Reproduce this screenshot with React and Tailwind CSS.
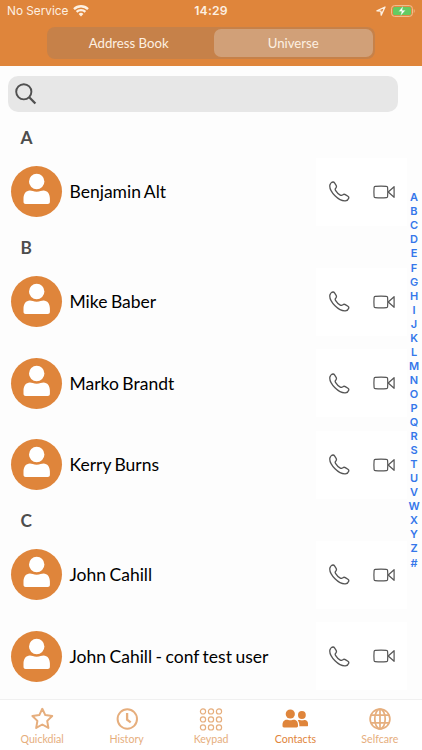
const sections = [
  { letter: 'A', contacts: ['Benjamin Alt'] },
  { letter: 'B', contacts: ['Mike Baber', 'Marko Brandt', 'Kerry Burns'] },
  { letter: 'C', contacts: ['John Cahill', 'John Cahill - conf test user'] },
]

const index = 'ABCDEFGHIJKLMNOPQRSTUVWXYZ#'.split('')

function StatusBar() {
  return (
    <div className="flex h-[22px] items-center px-[7px] font-['Inter',sans-serif] text-[11.8px] text-[#fdf0e2]">
      <div className="flex flex-1 items-center gap-[5px]">
        <span className="pt-px">No Service</span>
        <svg width="16" height="12" viewBox="0 0 16 12" fill="none" stroke="currentColor" strokeWidth="2.3">
          <path d="M1 4.1a10 10 0 0 1 14 0" />
          <path d="M3.6 6.9a6.3 6.3 0 0 1 8.8 0" />
          <path d="M8 11.4 5.6 9a3.4 3.4 0 0 1 4.8 0Z" fill="currentColor" stroke="none" />
        </svg>
      </div>
      <span className="pt-px text-[12.2px] font-semibold tracking-[0.2px]">14:29</span>
      <div className="flex flex-1 items-center justify-end gap-[5px]">
        <svg width="10" height="10" viewBox="0 0 10 10" fill="none" stroke="currentColor" strokeWidth="1.3" strokeLinejoin="round">
          <path d="M.9 4.9 9 1 5.2 9.1 4.9 5.1Z" />
        </svg>
        <svg width="24" height="12" viewBox="0 0 24 12">
          <rect x=".6" y=".6" width="20.8" height="10.8" rx="3" fill="none" stroke="#f3c497" />
          <rect x="2" y="2" width="18" height="8" rx="1.6" fill="#64cb62" />
          <path d="M22.8 4v4c1.1-.5 1.1-3.5 0-4Z" fill="#f3c497" />
          <path d="M12.1 1 7.5 6.6h3L9.5 11l5-5.8h-3.1Z" fill="#fff" stroke="#64cb62" strokeWidth=".4" />
        </svg>
      </div>
    </div>
  )
}

function PhoneIcon() {
  return (
    <svg width="21" height="21" viewBox="0 0 21 21" fill="none" stroke="#555" strokeWidth="1.3" strokeLinejoin="round">
      <path d="M.9 4C1.2 2.500 2.800 1 4.100 1c.8 0 1.200.5 1.600 1.100l1.400 2.200c.6 1 .5 1.700-.1 2.500l-.6.8c-.4.6-.3 1.100.1 1.700 1.200 2 2.800 3.600 4.800 4.800.6.4 1.100.4 1.700.1l.8-.5c.9-.6 1.600-.7 2.500-.1l2.600 1.700c.8.5 1.100 1.100.8 1.900-.5 1.500-1.900 2.600-3.400 2.700-3.100.2-6.900-1.700-10.300-5.100C2.700 11.400.3 7 .9 4Z" />
    </svg>
  )
}

function VideoIcon() {
  return (
    <svg width="22" height="14" viewBox="0 0 22 14" fill="none" stroke="#555" strokeWidth="1.2" strokeLinejoin="round">
      <path d="M2.2 1.4q6-.7 11.3 0 1 .1 1.100 1.100.4 4.500 0 9-.1 1-1.100 1.100-5.300.7-11.300 0-1-.1-1.100-1.100-.4-4.500 0-9Q1.200 1.500 2.200 1.400Z" />
      <path d="M15.200 7 21.100 1.700v10.600Z" />
    </svg>
  )
}

function ContactRow({ name }) {
  return (
    <div className="flex h-[81.5px] items-center pl-[10.5px]">
      <div className="flex h-[51px] w-[51px] shrink-0 justify-center rounded-full bg-[#df853b]">
        <svg width="51" height="51" viewBox="0 0 51 51" fill="#fff">
          <circle cx="25.700" cy="15.500" r="7.700" />
          <path d="M18.900 24.500c2 0 3.500 1.200 6.800 1.200s4.800-1.200 6.800-1.200c4 0 6.400 3.600 6.400 8v3.300c0 1.500-.9 2.200-2.200 2.200h-22c-1.300 0-2.200-.7-2.200-2.200v-3.300c0-4.400 2.400-8 6.400-8Z" />
        </svg>
      </div>
      <span className="flex-1 pt-0.5 pl-2 text-[17.5px] whitespace-nowrap text-black [word-spacing:-1px]">{name}</span>
      <div className="mr-[15px] flex h-[68px] w-[91px] items-center gap-[23.5px] bg-white pl-[12.5px]">
        <PhoneIcon />
        <VideoIcon />
      </div>
    </div>
  )
}

function StarIcon() {
  return (
    <svg width="24" height="24" viewBox="0 0 24 24" fill="none" stroke="currentColor" strokeWidth="2" strokeLinejoin="round">
      <path d="m12.3 1.800 3 6.300 6.900.9-5 4.900 1.200 7-6.100-3.400-6.100 3.400 1.200-7-5-4.900 6.900-.9Z" />
    </svg>
  )
}

function ClockIcon() {
  return (
    <svg width="24" height="24" viewBox="0 0 24 24" fill="none" stroke="currentColor" strokeWidth="2">
      <circle cx="12.300" cy="12" r="9.700" />
      <path d="M12.100 6v6.600l3.600 2.700" strokeWidth="2.300" />
    </svg>
  )
}

function KeypadIcon() {
  return (
    <svg width="24" height="24" viewBox="0 0 24 24" fill="none" stroke="currentColor" strokeWidth="1.200">
      {[4, 12, 20].map((y) => [4, 12, 20].map((x) => <circle key={`${x}-${y}`} cx={x} cy={y + 0.4} r="2.600" />))}
    </svg>
  )
}

function PeopleIcon() {
  return (
    <svg width="26" height="24" viewBox="0 0 26 24" fill="currentColor">
      <circle cx="8.300" cy="7" r="4.600" />
      <path d="M4.600 12.700c1.500 0 2 .6 3.700.6s2.200-.6 3.700-.6c2.700 0 4 2.500 4 5v1.400c0 .9-.6 1.400-1.400 1.400H1.900c-.8 0-1.400-.5-1.400-1.400v-1.400c0-2.500 1.400-5 4.100-5Z" />
      <circle cx="19.900" cy="8" r="3.900" />
      <path d="M15.700 13.500c.4-.3.900-.4 1.500-.4 1.200 0 1.500.4 2.800.4s1.600-.4 2.800-.4c2.200 0 3.300 2.100 3.300 4v1c0 .8-.4 1.200-1.100 1.200h-7.700c.2-2.300-.2-4.300-1.600-5.800Z" />
    </svg>
  )
}

function GlobeIcon() {
  return (
    <svg width="24" height="24" viewBox="0 0 24 24" fill="none" stroke="currentColor" strokeWidth="1.700">
      <circle cx="12" cy="12" r="9.900" />
      <ellipse cx="12" cy="12" rx="5.200" ry="9.900" />
      <path d="M12 2v20M2.700 8.200h18.600M2.700 15.800h18.600" />
    </svg>
  )
}

const tabs = [
  { label: 'Quickdial', icon: StarIcon },
  { label: 'History', icon: ClockIcon },
  { label: 'Keypad', icon: KeypadIcon },
  { label: 'Contacts', icon: PeopleIcon, active: true },
  { label: 'Selfcare', icon: GlobeIcon },
]

export default function App() {
  return (
    <div className="relative flex h-[750px] w-[422px] flex-col overflow-hidden bg-[#fdfdfd] font-['Lato',sans-serif]">
      <header className="h-[65.5px] shrink-0 bg-[#df853b]">
        <StatusBar />
        <div className="mt-[5px] ml-[47px] flex h-8 w-[328px] rounded-lg bg-[#c68149] p-0.5 text-[13.2px] text-[#fdf0e2]">
          <div className="flex w-[164.5px] items-center justify-center pt-px pr-[5px]">Address Book</div>
          <div className="flex flex-1 items-center justify-center rounded-[7px] bg-[#d1a078] pt-px">Universe</div>
        </div>
      </header>

      <div className="mt-[10.5px] ml-2 flex h-9 w-[390px] shrink-0 items-center rounded-[10px] bg-[#e7e7e7] pl-[6.5px]">
        <svg width="22" height="22" viewBox="0 0 22 22" fill="none" stroke="#505050" strokeWidth="1.9">
          <circle cx="8.800" cy="8.800" r="7.600" />
          <path d="m14.200 14.200 6.200 6.300" strokeWidth="2.300" />
        </svg>
      </div>

      <main className="mt-[10.25px] flex-1">
        {sections.map((section) => (
          <section key={section.letter}>
            <h2 className="flex h-[28.5px] items-center pt-0.5 pl-[20.5px] text-[17.3px] font-bold text-[#4d4d4d]">
              {section.letter}
            </h2>
            {section.contacts.map((name) => (
              <ContactRow key={name} name={name} />
            ))}
          </section>
        ))}
      </main>

      <nav className="absolute top-[190.5px] right-0 flex w-4 flex-col text-center font-['Inter',sans-serif] text-[11px] font-semibold text-[#3577ea]">
        {index.map((letter) => (
          <span key={letter} className="flex h-[14.06px] items-center justify-center">{letter}</span>
        ))}
      </nav>

      <footer className="grid h-[51.5px] shrink-0 grid-cols-5 border-t border-[#f0f0f0] bg-white">
        {tabs.map(({ label, icon: Icon, active }) => (
          <div
            key={label}
            className={`flex flex-col items-center pt-[7px] text-[10.6px] leading-[17px] ${active ? 'text-[#df853b]' : 'text-[#e6ae7d]'}`}
          >
            <Icon />
            <span>{label}</span>
          </div>
        ))}
      </footer>
    </div>
  )
}
